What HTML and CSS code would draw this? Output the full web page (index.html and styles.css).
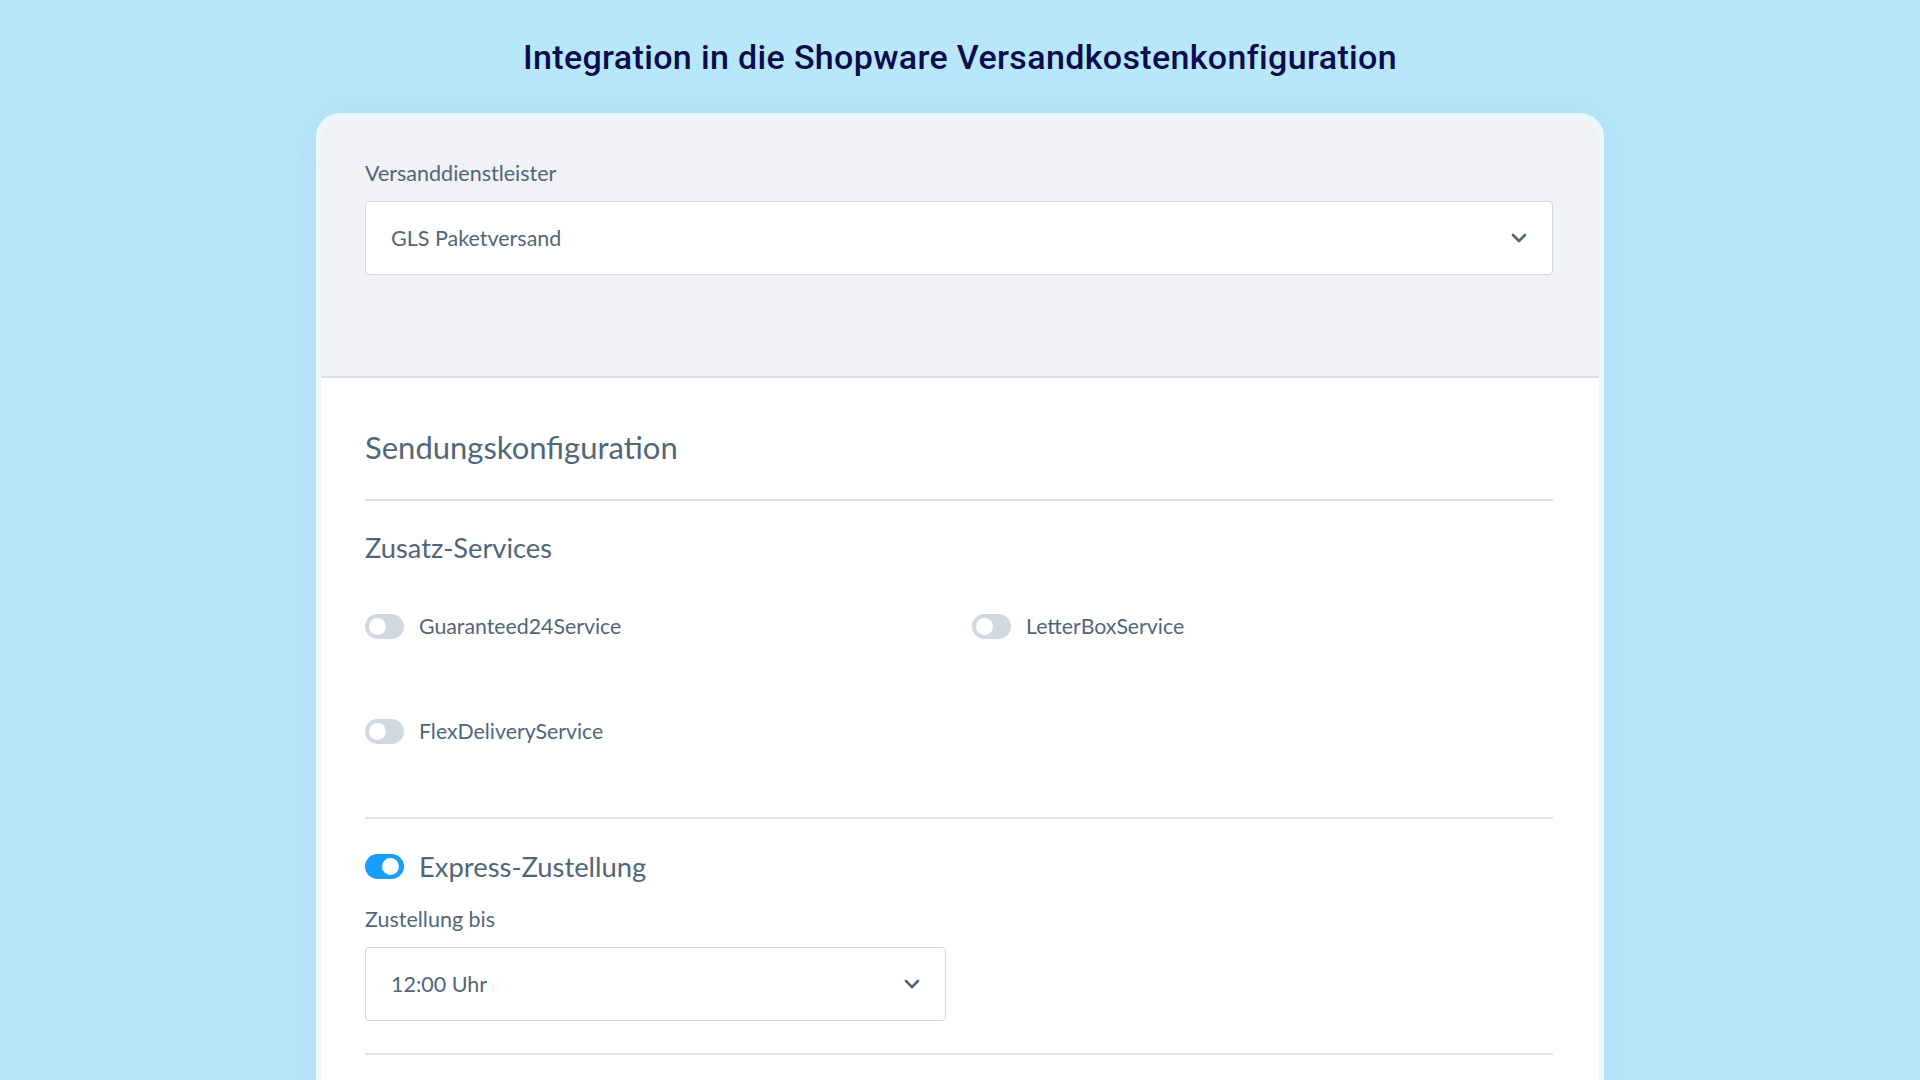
FILE: index.html
```html
<!DOCTYPE html>
<html lang="de">
<head>
<meta charset="utf-8">
<title>Integration in die Shopware Versandkostenkonfiguration</title>
<link rel="stylesheet" href="styles.css">
</head>
<body>
<h1 class="title">Integration in die Shopware Versandkostenkonfiguration</h1>
<div class="card">
  <div class="card-header">
    <div class="field-label">Versanddienstleister</div>
    <div class="select">
      <span class="select-value">GLS Paketversand</span>
      <svg class="chevron" width="16" height="10" viewBox="0 0 16 10"><path d="M2 2 L8 8 L14 2" fill="none" stroke="#52667a" stroke-width="2.6" stroke-linecap="round" stroke-linejoin="round"/></svg>
    </div>
  </div>
  <div class="card-body">
    <h2 class="section-title">Sendungskonfiguration</h2>
    <div class="divider divider-top"></div>
    <h3 class="sub-title">Zusatz-Services</h3>
    <div class="services">
      <div class="switch-row"><span class="switch"><span class="knob"></span></span><span class="switch-label">Guaranteed24Service</span></div>
      <div class="switch-row"><span class="switch"><span class="knob"></span></span><span class="switch-label">LetterBoxService</span></div>
      <div class="switch-row"><span class="switch"><span class="knob"></span></span><span class="switch-label">FlexDeliveryService</span></div>
    </div>
    <div class="divider divider-services"></div>
    <div class="switch-row express"><span class="switch on"><span class="knob"></span></span><span class="switch-label big">Express-Zustellung</span></div>
    <div class="field-label small-gap">Zustellung bis</div>
    <div class="select half">
      <span class="select-value">12:00 Uhr</span>
      <svg class="chevron" width="16" height="10" viewBox="0 0 16 10"><path d="M2 2 L8 8 L14 2" fill="none" stroke="#52667a" stroke-width="2.6" stroke-linecap="round" stroke-linejoin="round"/></svg>
    </div>
    <div class="divider divider-last"></div>
  </div>
</div>
</body>
</html>
```
FILE: styles.css
```css
html, body {
  margin: 0;
  padding: 0;
}
body {
  background: #b9e7fa;
  height: 1080px;
  overflow: hidden;
  font-family: Lato, "Open Sans", sans-serif;
  color: #52667a;
}
.title {
  margin: 37px 0 0;
  font-family: Roboto, "Liberation Sans", sans-serif;
  font-weight: 500;
  font-size: 34px;
  letter-spacing: 0.35px;
  line-height: 40px;
  color: #0b0c4d;
  text-align: center;
}
.card {
  width: 1288px;
  box-sizing: border-box;
  margin: 36px auto 0;
  border: 5px solid #eaf7fd;
  border-radius: 24px;
  background: #ffffff;
  overflow: hidden;
  min-height: 1100px;
  box-shadow: 0 0 40px rgba(60, 140, 190, 0.12);
}
.card-header {
  background: #f0f2f5;
  padding: 42px 46px 101px 44px;
  border-bottom: 2px solid #d8dee5;
}
.field-label {
  font-size: 21.5px;
  line-height: 26px;
  margin-bottom: 15px;
}
.select {
  height: 74px;
  box-sizing: border-box;
  border: 1px solid #d1d9e0;
  border-radius: 4px;
  background: #ffffff;
  display: flex;
  align-items: center;
  justify-content: space-between;
  padding: 0 25px 0 25px;
}
.select.half {
  width: 581px;
}
.select-value {
  font-size: 21.5px;
  color: #52667a;
}
.chevron {
  display: block;
}
.card-body {
  padding: 51px 46px 0 44px;
}
.section-title {
  margin: 0;
  font-weight: 400;
  font-size: 31px;
  line-height: 36px;
}
.divider {
  height: 2px;
  background: #dfe4e9;
}
.divider-top {
  margin-top: 34px;
}
.sub-title {
  margin: 32px 0 0;
  font-weight: 400;
  font-size: 27.3px;
  line-height: 30px;
}
.services {
  display: grid;
  grid-template-columns: 581px 581px;
  column-gap: 26px;
  row-gap: 65px;
  margin-top: 43px;
}
.switch-row {
  display: flex;
  align-items: center;
  height: 40px;
  gap: 15px;
}
.switch {
  width: 39px;
  height: 25px;
  border-radius: 13px;
  background: #d1d9e0;
  display: flex;
  align-items: center;
  padding: 0 4px;
  box-sizing: border-box;
  flex: none;
}
.knob {
  width: 17px;
  height: 17px;
  border-radius: 50%;
  background: #ffffff;
}
.switch.on {
  background: #189eff;
  justify-content: flex-end;
  padding: 0 5px;
}
.switch-label {
  font-size: 21.3px;
}
.switch-label.big {
  font-size: 27.4px;
}
.divider-services {
  margin-top: 66px;
}
.express {
  margin-top: 27px;
}
.small-gap {
  margin-top: 20px;
}
.divider-last {
  margin-top: 32px;
}
```
